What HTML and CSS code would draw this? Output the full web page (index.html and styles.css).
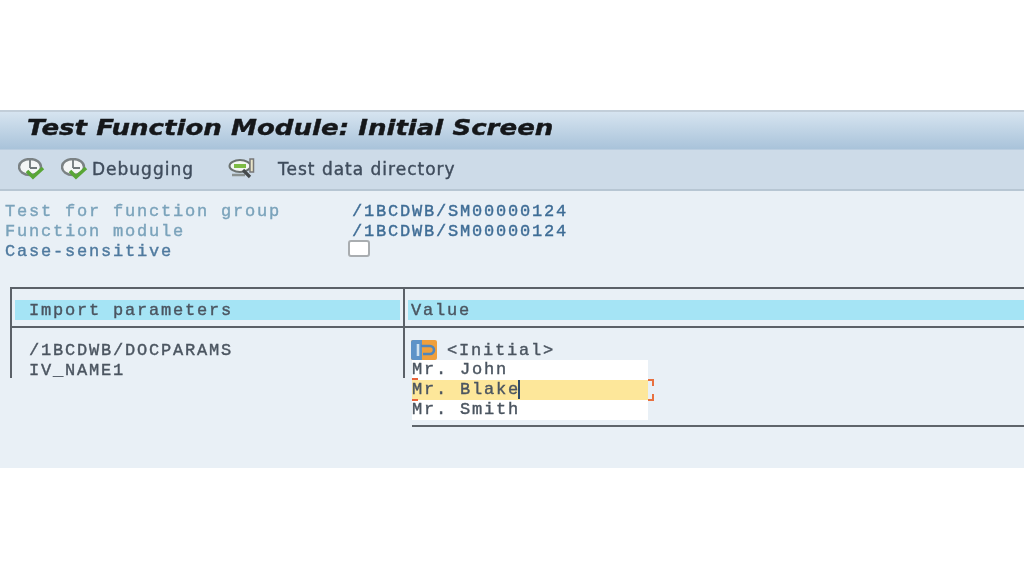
FILE: index.html
```html
<!DOCTYPE html>
<html lang="en">
<head>
<meta charset="utf-8">
<title>Test Function Module: Initial Screen</title>
<link rel="stylesheet" href="styles.css">
</head>
<body>
<main class="window">
  <header class="titlebar"><h1>Test Function Module: Initial Screen</h1></header>
  <nav class="toolbar">
    <svg class="tool-icon first" viewBox="0 0 28 22"><use href="#exec"/></svg>
    <svg class="tool-icon second" viewBox="0 0 28 22"><use href="#exec"/></svg>
    <span class="tool-label">Debugging</span>
    <svg class="tool-icon third" viewBox="0 0 28 22">
      <ellipse cx="12" cy="8" rx="10.5" ry="6" fill="#f3f6f4" stroke="#6b7270" stroke-width="2"/>
      <path d="M6 6h12v4H6z" fill="#7dbb45"/>
      <path d="M4 17h13" stroke="#8a9190" stroke-width="2.5"/>
      <path d="M22 1h3.5v13H22z" fill="#e8e4c8" stroke="#777" stroke-width="1.5"/>
      <path d="M15 12l7 7" stroke="#454a4c" stroke-width="3.2"/>
    </svg>
    <span class="tool-label">Test data directory</span>
  </nav>
  <section class="info">
    <div class="info-row"><span class="info-label pale">Test for function group</span><span class="info-value">/1BCDWB/SM00000124</span></div>
    <div class="info-row"><span class="info-label pale">Function module</span><span class="info-value">/1BCDWB/SM00000124</span></div>
    <div class="info-row"><span class="info-label strong">Case-sensitive</span><span class="checkbox"></span></div>
  </section>
  <section class="table">
    <div class="cell head-left"><span class="band band-left">Import parameters</span></div>
    <div class="cell head-right"><span class="band band-right">Value</span></div>
    <div class="cell body-left">
      <div class="row">/1BCDWB/DOCPARAMS</div>
      <div class="row">IV_NAME1</div>
    </div>
    <div class="cell body-right">
      <div class="row initial">
        <svg class="struct-icon" viewBox="0 0 26 20">
          <rect width="26" height="20" rx="2" fill="#ef9f3c"/>
          <path d="M0 2a2 2 0 0 1 2-2h9v20H2a2 2 0 0 1-2-2z" fill="#5d93c8"/>
          <path d="M10 6h9a3.5 3.5 0 0 1 0 8h-7" fill="none" stroke="#4f86bd" stroke-width="2.6"/>
          <path d="M7 4v12" stroke="#cfe2f0" stroke-width="2.6"/>
        </svg>
        <span>&lt;Initial&gt;</span>
      </div>
    </div>
    <div class="entries">
      <div class="entry">Mr. John</div>
      <div class="entry active">Mr. Blake<i class="caret"></i></div>
      <div class="entry">Mr. Smith</div>
      <i class="tick tick-a"></i>
      <i class="tick tick-b"></i>
      <i class="corner corner-top"></i>
      <i class="corner corner-bottom"></i>
    </div>
  </section>
</main>
<svg class="defs" aria-hidden="true">
  <defs>
    <g id="exec">
      <ellipse cx="12" cy="9" rx="11" ry="8" fill="#f4f6f6" stroke="#7b8284" stroke-width="2.4"/>
      <path d="M12 2v8M12 10h7" stroke="#70787a" stroke-width="1.8"/>
      <path d="M9 13l6 6 10-9" fill="none" stroke="#58a636" stroke-width="3.6"/>
    </g>
  </defs>
</svg>
</body>
</html>
```
FILE: styles.css
```css
* { box-sizing: border-box; }
html, body { margin: 0; height: 100%; background: #fff; overflow: hidden; }
body { padding-top: 110px; }
.defs { position: absolute; width: 0; height: 0; }

.window {
  height: 358px;
  background: #e9f0f6;
  display: flex;
  flex-direction: column;
  font-family: "Liberation Mono", monospace;
  font-size: 17px;
  letter-spacing: 1.8px;
  color: #4b5560;
  -webkit-text-stroke: 0.4px currentColor;
  filter: blur(0.5px);
}

.titlebar {
  height: 39px;
  flex: none;
  padding: 0 0 6px 27px;
  display: flex;
  align-items: center;
  border-top: 2px solid #c2ced9;
  background: linear-gradient(#d6e4f0, #a9c3da);
}
.titlebar h1 {
  margin: 0;
  font: italic bold 22px "DejaVu Sans", sans-serif;
  letter-spacing: 0;
  white-space: nowrap;
  transform: scaleX(1.185);
  transform-origin: left center;
  color: #15171a;
}

.toolbar {
  height: 42px;
  flex: none;
  display: flex;
  align-items: center;
  padding-bottom: 1px;
  background: #cddbe8;
  border-top: 1px solid #b9cde0;
  border-bottom: 2px solid #b7c6d3;
  font-family: "DejaVu Sans", sans-serif;
  font-size: 17px;
  letter-spacing: 1px;
  color: #3f4c5c;
}
.tool-icon { width: 28px; height: 22px; flex: none; }
.tool-icon.first { margin-left: 18px; }
.tool-icon.second { margin: 0 3px 0 15px; }
.tool-icon.third { margin: 0 22px 0 34px; }
.tool-label { white-space: pre; }

.info {
  padding: 10px 0 0 5px;
  height: 96px;
  flex: none;
}
.info-row { display: flex; align-items: center; height: 20px; white-space: pre; }
.info-label { width: 347px; flex: none; }
.pale { color: #7ba3bb; }
.strong { color: #4f7a9f; }
.info-value { color: #3f6d96; }
.checkbox {
  width: 22px;
  height: 17px;
  margin: -5px 0 0 -4px;
  background: #fff;
  border: 2px solid #a9adb0;
  border-radius: 3px;
}

.table {
  position: relative;
  margin-left: 10px;
  display: grid;
  grid-template-columns: 393px 1fr;
  grid-template-rows: 41px 50px;
}
.cell { border-left: 2px solid #5b6168; }
.head-left, .head-right {
  border-top: 2px solid #5b6168;
  border-bottom: 2px solid #5b6168;
  padding-top: 11px;
}
.band {
  display: block;
  height: 20px;
  line-height: 21px;
  background: #a5e4f5;
  white-space: pre;
}
.band-left { margin: 0 3px 0 3px; padding-left: 14px; }
.band-right { margin-left: 3px; padding-left: 3px; }
.body-left { padding: 13px 0 0 17px; }
.body-right { padding: 13px 0 0 6px; }
.row { height: 20px; line-height: 20px; white-space: pre; }
.initial { display: flex; align-items: center; gap: 10px; }
.struct-icon { width: 26px; height: 20px; flex: none; margin-top: -2px; }

.entries {
  position: absolute;
  left: 402px;
  top: 73px;
  width: 612px;
  height: 67px;
  border-bottom: 2px solid #5f656b;
}
.entry {
  width: 236px;
  height: 20px;
  line-height: 20px;
  background: #fff;
  white-space: pre;
}
.entry.active { width: 236px; background: #fde79a; }
.caret {
  display: inline-block;
  width: 2px;
  height: 19px;
  margin-left: -2px;
  vertical-align: top;
  background: #2f4a68;
}
.tick { position: absolute; left: 0; width: 6px; height: 2px; background: #e8633a; }
.tick-a { top: 18px; }
.tick-b { top: 39px; }
.corner { position: absolute; left: 236px; width: 6px; height: 7px; border-right: 2px solid #e8703f; }
.corner-top { top: 19px; border-top: 2px solid #e8703f; }
.corner-bottom { top: 34px; border-bottom: 2px solid #e8703f; }
```
